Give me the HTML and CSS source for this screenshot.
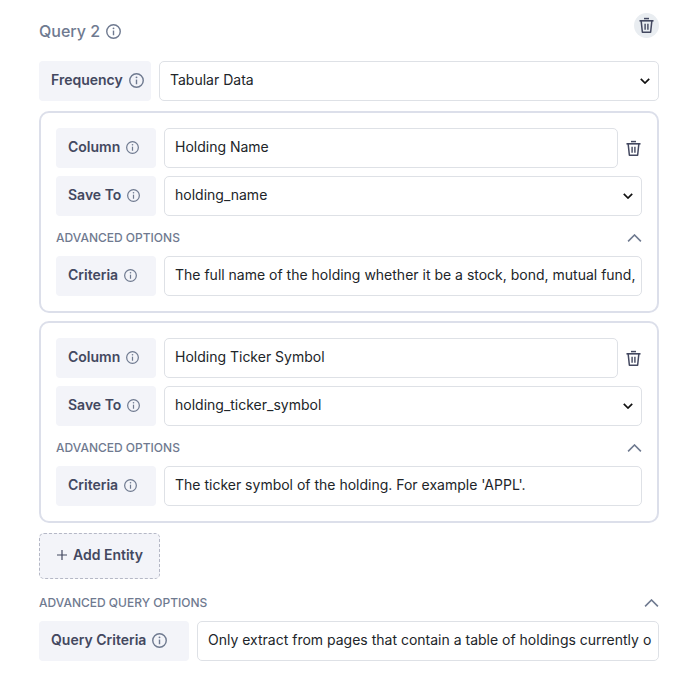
FILE: index.html
```html
<!DOCTYPE html>
<html lang="en">

<head>
    <meta charset="UTF-8">
    <meta name="viewport" content="width=device-width, initial-scale=1.0">
    <title>Query 2</title>
    <link rel="stylesheet" href="styles.css">
</head>

<body>
    <!-- Shared icons -->
    <svg class="icon-defs" aria-hidden="true">
        <symbol id="info" viewBox="0 0 16 16">
            <circle cx="8" cy="8" r="7.2" fill="none" stroke="currentColor" stroke-width="1.5" />
            <path d="M8 7v5" fill="none" stroke="currentColor" stroke-width="1.5" />
            <circle cx="8" cy="4.6" r="1" fill="currentColor" />
        </symbol>
        <symbol id="trash" viewBox="0 0 16 18">
            <path d="M0.5 4h15" fill="none" stroke="currentColor" stroke-width="1.7" />
            <path d="M5.3 1.6h5.4" fill="none" stroke="currentColor" stroke-width="1.6" />
            <path d="M2.3 4l1.3 12.2h8.8L13.7 4" fill="none" stroke="currentColor" stroke-width="1.6" stroke-linejoin="round" />
            <path d="M6.5 7v6.5M9.5 7v6.5" fill="none" stroke="currentColor" stroke-width="1.5" />
        </symbol>
        <symbol id="chevron-up" viewBox="0 0 14 8">
            <path d="M0.6 7.4L7 1l6.4 6.4" fill="none" stroke="currentColor" stroke-width="1.6" />
        </symbol>
        <symbol id="chevron-down" viewBox="0 0 10 6">
            <path d="M0.8 0.8L5 5l4.2-4.2" fill="none" stroke="currentColor" stroke-width="1.7" />
        </symbol>
        <symbol id="plus" viewBox="0 0 10 10">
            <path d="M5 0v10M0 5h10" fill="none" stroke="currentColor" stroke-width="1.2" />
        </symbol>
    </svg>

    <form class="query">
        <header class="query-header">
            <h2>Query 2 <svg class="info info-lg"><use href="#info" /></svg></h2>
            <button type="button" class="delete-query" aria-label="Delete query"><svg class="trash"><use href="#trash" /></svg></button>
        </header>

        <div class="row">
            <label class="tag tag-frequency" for="frequency">Frequency <svg class="info info-lg"><use href="#info" /></svg></label>
            <div class="select">
                <select id="frequency">
                    <option>Tabular Data</option>
                </select>
                <svg class="arrow"><use href="#chevron-down" /></svg>
            </div>
        </div>

        <section class="entity">
            <div class="row">
                <label class="tag" for="column1">Column <svg class="info"><use href="#info" /></svg></label>
                <input type="text" id="column1" value="Holding Name">
                <button type="button" class="delete" aria-label="Delete entity"><svg class="trash"><use href="#trash" /></svg></button>
            </div>
            <div class="row">
                <label class="tag" for="save1">Save To <svg class="info"><use href="#info" /></svg></label>
                <div class="select">
                    <select id="save1">
                        <option>holding_name</option>
                    </select>
                    <svg class="arrow"><use href="#chevron-down" /></svg>
                </div>
            </div>
            <button type="button" class="toggle">ADVANCED OPTIONS <svg class="caret"><use href="#chevron-up" /></svg></button>
            <div class="row">
                <label class="tag" for="criteria1">Criteria <svg class="info"><use href="#info" /></svg></label>
                <input type="text" id="criteria1" value="The full name of the holding whether it be a stock, bond, mutual fund,">
            </div>
        </section>

        <section class="entity">
            <div class="row">
                <label class="tag" for="column2">Column <svg class="info"><use href="#info" /></svg></label>
                <input type="text" id="column2" value="Holding Ticker Symbol">
                <button type="button" class="delete" aria-label="Delete entity"><svg class="trash"><use href="#trash" /></svg></button>
            </div>
            <div class="row">
                <label class="tag" for="save2">Save To <svg class="info"><use href="#info" /></svg></label>
                <div class="select">
                    <select id="save2">
                        <option>holding_ticker_symbol</option>
                    </select>
                    <svg class="arrow"><use href="#chevron-down" /></svg>
                </div>
            </div>
            <button type="button" class="toggle">ADVANCED OPTIONS <svg class="caret"><use href="#chevron-up" /></svg></button>
            <div class="row">
                <label class="tag" for="criteria2">Criteria <svg class="info"><use href="#info" /></svg></label>
                <input type="text" id="criteria2" value="The ticker symbol of the holding. For example 'APPL'.">
            </div>
        </section>

        <button type="button" class="add-entity"><svg class="plus"><use href="#plus" /></svg> Add Entity</button>

        <button type="button" class="toggle">ADVANCED QUERY OPTIONS <svg class="caret"><use href="#chevron-up" /></svg></button>
        <div class="row">
            <label class="tag tag-query" for="queryCriteria">Query Criteria <svg class="info info-lg"><use href="#info" /></svg></label>
            <input type="text" id="queryCriteria" value="Only extract from pages that contain a table of holdings currently o">
        </div>
    </form>
</body>

</html>
```

FILE: styles.css
```css
* {
    box-sizing: border-box;
}

body {
    margin: 0;
    background-color: #fff;
    color: #212529;
    font-family: Inter, "Open Sans", sans-serif;
    font-size: 14px;
    line-height: 20px;
}

button,
input,
select {
    font: inherit;
    color: inherit;
}

button {
    border: none;
    padding: 0;
    background: none;
    cursor: pointer;
}

svg {
    flex: none;
}

.icon-defs {
    display: none;
}

.query {
    padding: 13px 40px 16px 39px;
}

.query-header {
    display: flex;
    justify-content: space-between;
    align-items: flex-start;
    height: 48px;
}

.query-header h2 {
    display: flex;
    align-items: center;
    gap: 6px;
    margin: 0;
    color: #6f7a90;
    font-size: 16px;
    font-weight: 500;
    line-height: 37px;
}

.delete-query {
    display: flex;
    align-items: center;
    justify-content: center;
    width: 25px;
    height: 25px;
    border-radius: 50%;
    background-color: #e9edf1;
    color: #434860;
}

.row {
    display: flex;
    gap: 8px;
}

.row + .row {
    margin-top: 8px;
}

.tag {
    display: flex;
    flex: none;
    align-items: center;
    gap: 6px;
    width: 100px;
    height: 40px;
    padding-left: 12px;
    padding-bottom: 2px;
    border-radius: 4px;
    background-color: #f3f4f9;
    color: #434860;
    font-weight: 600;
}

.tag-frequency {
    width: 112px;
}

.tag-query {
    width: 150px;
}

input,
select {
    flex: 1;
    width: 100%;
    min-width: 0;
    height: 40px;
    padding: 0 10px 2px;
    border: 1px solid #dee1e6;
    border-radius: 5px;
    background-color: #fff;
}

input {
    padding: 0 5px 3px 10px;
}

select {
    appearance: none;
}

.select {
    position: relative;
    flex: 1;
}

.arrow {
    position: absolute;
    top: 17px;
    right: 9px;
    width: 10px;
    height: 6px;
    color: #111;
    pointer-events: none;
}

.info {
    width: 13px;
    height: 13px;
    color: #6f7a90;
}

.info-lg {
    width: 15px;
    height: 15px;
}

.trash {
    width: 15px;
    height: 17px;
}

.delete {
    display: flex;
    align-items: center;
    width: 16px;
    color: #434860;
}

.entity {
    margin-top: 8px;
    padding: 15px;
    border: 2px solid #dcdfea;
    border-radius: 10px;
}

.row + .entity {
    margin-top: 10px;
}

.toggle {
    display: flex;
    align-items: center;
    justify-content: space-between;
    width: 100%;
    height: 40px;
    padding-top: 4px;
    color: #6f7a90;
    font-size: 12px;
    font-weight: 500;
}

.caret {
    width: 15px;
    height: 8px;
}

.add-entity {
    display: flex;
    align-items: center;
    gap: 6px;
    height: 46px;
    margin-top: 10px;
    padding: 0 16px 2px 17px;
    border: 1px dashed #b5b8c6;
    border-radius: 5px;
    background-color: #f3f4f9;
    color: #434860;
    font-weight: 600;
}

.add-entity + .toggle {
    height: 42px;
    padding-top: 6px;
}

.plus {
    width: 10px;
    height: 10px;
}
```
